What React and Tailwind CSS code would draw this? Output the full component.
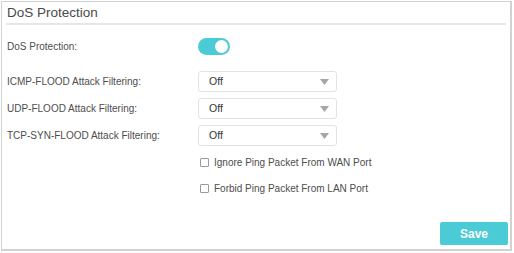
import React from "react";

function Select() {
  return (
    <div className="w-[139px] h-[21px] rounded-[3px] border border-[#e3e3e3] bg-white flex items-center justify-between pl-[10px] pr-[7px]">
      <span className="text-[10.5px] text-[#333]">Off</span>
      <svg width="9" height="6" viewBox="0 0 9 6"><path d="M0 0h9L4.5 6z" fill="#a6a6a6" /></svg>
    </div>
  );
}

function Row({ label, children, className = "" }) {
  return (
    <div className={"flex items-center " + className}>
      <div className="w-[191px] text-[10px] text-[#4d4d4d]">{label}</div>
      {children}
    </div>
  );
}

function Check({ label }) {
  return (
    <div className="flex items-center pl-[198px] h-[12px]">
      <div className="w-[9px] h-[9px] border border-[#9a9a9a] rounded-[1px] bg-white" />
      <span className="ml-[5px] text-[10px] text-[#4d4d4d]">{label}</span>
    </div>
  );
}

export default function App() {
  return (
    <div className="w-[514px] h-[253px] bg-white pt-[1px] pl-[1px]" style={{ fontFamily: "'Liberation Sans', Arial, sans-serif" }}>
      <div className="w-[511px] h-[250px] border border-[#d2d2d2] border-r-2 border-b-2 flex flex-col">
        <div className="mx-[4px] h-[23px] border-b-2 border-[#e6e6e6] flex items-center pl-[1px]">
          <span className="text-[13.5px] text-[#4a4a4a] leading-none">DoS Protection</span>
        </div>
        <div className="pl-[5px]">
          <Row label="DoS Protection:" className="mt-[12px] h-[18px]">
            <div className="w-[32px] h-[17px] rounded-full bg-[#4acbd6] flex items-center justify-end pr-[2px]">
              <div className="w-[13px] h-[13px] rounded-full bg-white" />
            </div>
          </Row>
          <Row label="ICMP-FLOOD Attack Filtering:" className="mt-[16px]"><Select /></Row>
          <Row label="UDP-FLOOD Attack Filtering:" className="mt-[6px]"><Select /></Row>
          <Row label="TCP-SYN-FLOOD Attack Filtering:" className="mt-[6px]"><Select /></Row>
        </div>
        <div className="mt-[10px] flex flex-col gap-[14px]">
          <Check label="Ignore Ping Packet From WAN Port" />
          <Check label="Forbid Ping Packet From LAN Port" />
        </div>
        <div className="flex justify-end mt-auto mb-[4px] mr-[2px]">
          <div className="w-[68px] h-[23px] bg-[#4acbd6] rounded-[2px] flex items-center justify-center text-white text-[12px] font-bold">Save</div>
        </div>
      </div>
    </div>
  );
}
